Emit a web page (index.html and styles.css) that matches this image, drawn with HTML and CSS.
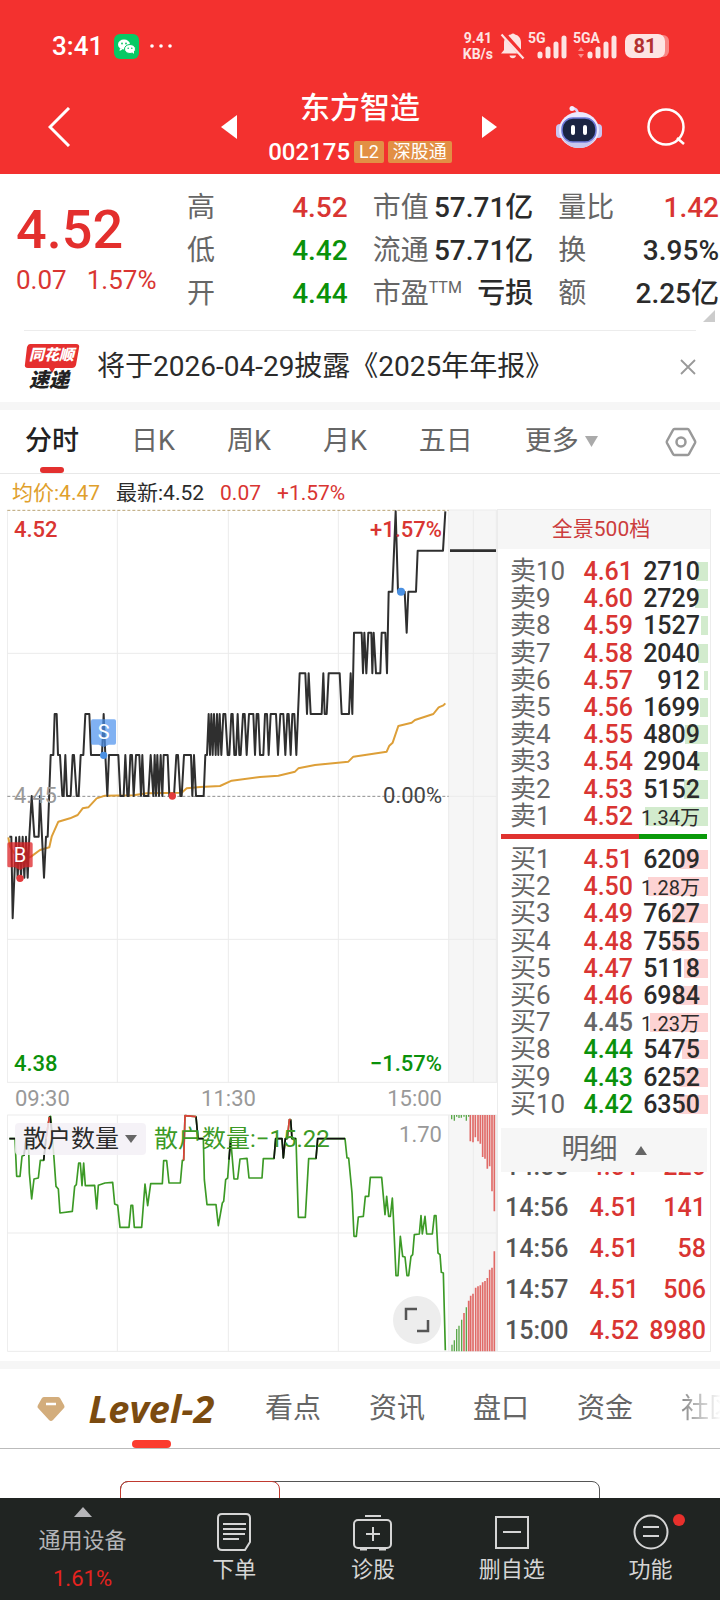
FILE: index.html
```html
<!DOCTYPE html>
<html lang="zh-CN">
<head>
    <meta charset="UTF-8">
    <meta name="viewport" content="width=device-width, initial-scale=1">
    <title>东方智造 002175</title>
    <link rel="stylesheet" href="styles.css">
</head>
<body>
    <header class="header">
        <div class="status-bar">
            <span class="clock">3:41</span>
            <svg class="wechat" width="25" height="25" viewBox="0 0 25 25">
                <rect width="25" height="25" rx="6" fill="#07c964"/>
                <ellipse cx="10" cy="10.500" rx="6" ry="5" fill="#fff"/>
                <path d="M6 14l-.5 3 3-1.500z" fill="#fff"/>
                <ellipse cx="16" cy="15" rx="5.500" ry="4.500" fill="#fff" stroke="#07c964"/>
                <path d="M18 18l2 2 0-3z" fill="#fff"/>
                <circle cx="8" cy="9.500" r=".9" fill="#07c964"/>
                <circle cx="12" cy="9.500" r=".9" fill="#07c964"/>
                <circle cx="14.200" cy="14.300" r=".8" fill="#07c964"/>
                <circle cx="17.800" cy="14.300" r=".8" fill="#07c964"/>
            </svg>
            <svg width="22" height="4" viewBox="0 0 22 4" fill="#fff">
                <circle cx="2" cy="2" r="1.800"/><circle cx="11" cy="2" r="1.800"/><circle cx="20" cy="2" r="1.800"/>
            </svg>
            <div class="net-speed">9.41<br>KB/s</div>
            <svg class="bell" width="26" height="28" viewBox="0 0 26 28">
                <path d="M1 21.500L4 18V11c0-5 3-8 7-8.500a2.500 2.500 0 0 1 4 0c4 1 6 4 6 8.500v7l3 3.500z" fill="#fde4e3"/>
                <path d="M9.500 23.500h6.500a3.300 3.300 0 0 1-6.500 0z" fill="#fde4e3"/>
                <path d="M3 1L25 26" stroke="#f3312f" stroke-width="5"/>
                <path d="M1.500 2.500L23.500 26.500" stroke="#fde4e3" stroke-width="2.200"/>
            </svg>
            <div class="signal">
                <span>5G</span>
                <svg width="30" height="25" viewBox="0 0 30 25" stroke="#fde4e3" stroke-width="5" stroke-linecap="round">
                    <path d="M3 20v2M11 15v7M19 10v12M27 4v18"/>
                </svg>
            </div>
            <div class="signal">
                <span>5GA</span>
                <svg width="40" height="25" viewBox="0 0 40 25">
                    <path d="M1 17l3-4 3 4zM1 20l3 4 3-4z" fill="#f98d8b"/>
                    <path d="M13 20v2M21 15v7M29 10v12M37 4v18" stroke="#fde4e3" stroke-width="5" stroke-linecap="round"/>
                </svg>
            </div>
            <div class="battery">81</div>
        </div>
        <nav class="title-bar">
            <div class="title-left">
                <button class="icon-btn" aria-label="返回">
                    <svg width="24" height="40" viewBox="0 0 24 40" fill="none" stroke="#fff" stroke-width="3">
                        <path d="M21 1L2 20l19 19"/>
                    </svg>
                </button>
                <button class="icon-btn" aria-label="上一只">
                    <svg width="16" height="24" viewBox="0 0 16 24" fill="#fff"><path d="M16 0v24L0 12z"/></svg>
                </button>
            </div>
            <div class="stock">
                <h1>东方智造</h1>
                <div class="stock-code">
                    <span>002175</span>
                    <span class="tag">L2</span>
                    <span class="tag">深股通</span>
                </div>
            </div>
            <div class="title-right">
                <button class="icon-btn" aria-label="下一只">
                    <svg width="16" height="22" viewBox="0 0 16 22" fill="#fff"><path d="M0 0v22L15 11z"/></svg>
                </button>
                <button class="icon-btn robot" aria-label="智能助手">
                    <svg width="46" height="42" viewBox="0 0 46 42">
                        <path d="M15 2q7 0 7 7" fill="none" stroke="#dcd3f8" stroke-width="2.500"/>
                        <circle cx="16" cy="2.500" r="2.500" fill="#f3edff"/>
                        <rect x="0" y="18" width="8" height="14" rx="4" fill="#c9c6f2"/>
                        <rect x="38" y="18" width="8" height="14" rx="4" fill="#c9c6f2"/>
                        <ellipse cx="23" cy="24" rx="20" ry="18" fill="#ebe8ff"/>
                        <path d="M6 32q17 10 34 0q-6 10-17 10T6 32z" fill="#c9c8ee"/>
                        <rect x="6" y="12" width="34" height="24" rx="11" fill="#1b2442" stroke="#6d78d8" stroke-width="1.500"/>
                        <path d="M17 21v6M29 21v6" stroke="#fff" stroke-width="4" stroke-linecap="round"/>
                    </svg>
                </button>
                <button class="icon-btn" aria-label="搜索">
                    <svg width="40" height="40" viewBox="0 0 40 40" fill="none" stroke="#fff" stroke-width="2.500">
                        <circle cx="20" cy="20" r="17.500"/><path d="M31 31l7 6"/>
                    </svg>
                </button>
            </div>
        </nav>
    </header>

    <section class="quote">
        <div class="quote-price">
            <strong>4.52</strong>
            <div class="quote-change"><span>0.07</span><span>1.57%</span></div>
        </div>
        <dl class="quote-list">
            <div><dt>高</dt><dd class="up">4.52</dd></div>
            <div><dt>低</dt><dd class="down">4.42</dd></div>
            <div><dt>开</dt><dd class="down">4.44</dd></div>
        </dl>
        <dl class="quote-list">
            <div><dt>市值</dt><dd>57.71亿</dd></div>
            <div><dt>流通</dt><dd>57.71亿</dd></div>
            <div><dt>市盈<sup>TTM</sup></dt><dd>亏损</dd></div>
        </dl>
        <dl class="quote-list">
            <div><dt>量比</dt><dd class="up">1.42</dd></div>
            <div><dt>换</dt><dd>3.95%</dd></div>
            <div><dt>额</dt><dd>2.25亿</dd></div>
        </dl>
        <svg class="quote-corner" width="12" height="12" viewBox="0 0 12 12"><path d="M12 0v12H0z" fill="#ccc"/></svg>
    </section>

    <section class="news">
        <div class="news-logo">
            <svg width="56" height="32" viewBox="0 0 56 32"><path d="M6 0h46q4 0 3 4l-3 17q-1 3-4 3H31l-3 5-3-5H4q-4 0-3-4L3 3q1-3 3-3z" fill="#e52f2e"/></svg>
            <span class="news-brand">同花顺</span>
            <span class="news-flash">速递</span>
        </div>
        <a class="news-text" href="#">将于2026-04-29披露《2025年年报》</a>
        <button class="icon-btn" aria-label="关闭">
            <svg width="16" height="16" viewBox="0 0 16 16" stroke="#999" stroke-width="1.800"><path d="M1 1l14 14M15 1L1 15"/></svg>
        </button>
    </section>

    <nav class="period-tabs">
        <button class="active">分时</button>
        <button>日K</button>
        <button>周K</button>
        <button>月K</button>
        <button>五日</button>
        <button>更多<svg width="13" height="11" viewBox="0 0 13 11"><path d="M0 0h13L6.500 11z" fill="#aaa"/></svg></button>
        <button class="settings" aria-label="设置">
            <svg width="32" height="30" viewBox="0 0 32 30" fill="none" stroke="#999" stroke-width="2.500">
                <path d="M9.500 2h13q1 0 1.500 1l6 11q.5 1 0 2l-6 11q-.5 1-1.500 1h-13q-1 0-1.500-1L2 16q-.5-1 0-2L8 3q.5-1 1.500-1z"/>
                <circle cx="16" cy="15" r="4.500"/>
            </svg>
        </button>
    </nav>

    <div class="legend">
        <span class="avg">均价:4.47</span>
        <span>最新:4.52</span>
        <span class="up">0.07</span>
        <span class="up">+1.57%</span>
    </div>

    <main class="board">
        <div class="charts">
            <div class="chart">
                <svg viewBox="21 27 1470 1722">
                    <rect x="1347" y="30" width="144" height="1718" fill="#f6f6f6"/>
                    <path class="grid" d="M22 30V1748M352 30V1748M685 30V1748M1015 30V1748M1346 30V1748M1420 30V1748M1489 30V1748M22 460H1490M22 1318H1490M22 1747H1490M1346 30H1490M1346 889H1490"/>
                    <path d="M22 31H1346" stroke="#b9a375" stroke-width="3" stroke-dasharray="9 6"/>
                    <path d="M22 889H1346" stroke="#8c8c8c" stroke-width="3" stroke-dasharray="9 6"/>
                    <!-- average price -->
                    <polyline class="line" stroke="#dd9f38" points="25,1012 30,1040 60,1085 93,1070 120,1050 148,1042 155,1010 175,965 210,955 233,945 248,925 265,922 290,895 315,887 400,886 440,880 545,878 560,865 600,861 660,858 695,842 780,831 835,827 885,815 895,805 945,795 1045,785 1060,770 1160,755 1168,737 1178,728 1195,678 1235,668 1245,660 1300,642 1316,622 1330,616 1336,610"/>
                    <!-- last price -->
                    <polyline class="line" stroke="#2f2f2f" points="28,1010 34,1010 38,1255 48,1012 53,1133 58,1010 63,1133 68,1010 73,1133 78,1010 83,1133 88,1010 95,888 103,1010 116,1010 120,888 126,1010 132,1133 138,1010 143,1010 152,765 160,765 164,642 170,642 174,765 180,765 187,888 191,888 196,765 201,888 212,888 218,765 222,765 230,888 236,888 242,765 250,765 256,642 268,642 273,765 306,765 311,642 316,765 322,888 327,765 355,765 361,888 371,888 376,765 382,888 386,888 391,765 396,765 401,888 408,765 418,765 423,888 427,765 432,888 445,888 452,765 460,888 464,765 468,888 472,765 477,888 482,765 487,888 491,765 503,765 508,888 522,888 529,765 534,765 541,888 545,888 552,765 573,765 577,888 582,765 588,888 611,888 616,765 621,765 626,642 630,765 634,642 638,765 642,642 647,765 651,642 655,765 659,642 664,765 670,642 676,642 683,765 688,765 694,642 698,642 703,765 708,765 713,642 718,765 722,765 729,642 734,642 740,765 747,642 760,642 765,765 770,642 775,642 780,765 790,765 795,642 801,642 806,765 812,642 828,642 834,765 841,642 850,642 856,765 862,642 866,642 872,765 877,642 883,642 889,765 894,642 899,520 916,520 921,642 926,520 932,642 965,642 970,520 974,642 980,642 986,520 1019,520 1025,642 1047,642 1052,520 1057,642 1062,398 1085,398 1089,520 1093,398 1099,520 1105,398 1114,398 1117,520 1121,398 1128,520 1141,520 1145,398 1156,398 1161,520 1166,275 1177,275 1187,34 1194,275 1214,275 1220,398 1225,275 1248,275 1253,152 1329,152 1336,34"/>
                    <path d="M1350 152H1488" stroke="#2f2f2f" stroke-width="8"/>
                    <!-- buy and sell marks -->
                    <path d="M278 658h65q5 0 5 5v66q0 5-5 5h-17l-15 8-15-8h-18q-5 0-5-5v-66q0-5 5-5z" fill="#4a90ec" fill-opacity=".7"/>
                    <path d="M27 1027h66q5 0 5 5v65q0 5-5 5H75l-15 9-15-9H27q-5 0-5-5v-65q0-5 5-5z" fill="#dd2226" fill-opacity=".75"/>
                    <text class="mark" x="311" y="716">S</text>
                    <text class="mark" x="60" y="1085">B</text>
                    <g fill="#e23a3c"><circle cx="60" cy="1135" r="11"/><circle cx="517" cy="888" r="11"/></g>
                    <g fill="#4a90e2"><circle cx="311" cy="766" r="11"/><circle cx="1203" cy="275" r="12"/></g>
                </svg>
                <span class="label top-left up">4.52</span>
                <span class="label top-right up">+1.57%</span>
                <span class="label mid-left">4.45</span>
                <span class="label mid-right">0.00%</span>
                <span class="label bottom-left down">4.38</span>
                <span class="label bottom-right down">−1.57%</span>
            </div>
            <div class="time-axis">
                <span>09:30</span>
                <span>11:30</span>
                <span>15:00</span>
            </div>
            <div class="chart">
                <svg viewBox="21 223 1470 714">
                    <rect x="1347" y="226" width="144" height="710" fill="#f6f6f6"/>
                    <path class="grid" d="M22 226V935M352 226V935M685 226V935M1015 226V935M1346 226V935M1420 226V935M1489 226V935M22 226H1490M22 580H1490M22 935H1490"/>
                    <g class="line thin">
                        <polyline stroke="#3c9a26" points="28,297 45,297 50,410 60,410 66,350 72,347 78,297 85,297 88,400 95,478 102,418 115,415 121,362 131,362 138,297 148,232 152,230 158,300 168,440 175,448 180,520 217,515 224,440 229,435 236,370 241,370 246,438 251,370 256,438 284,437 290,508 295,437 315,430 338,428 344,493 353,497 360,563 387,563 393,497 398,497 403,563 425,563 435,433 443,498 452,432 487,432 491,363 500,363 507,430 541,430 547,362 551,362 555,228 588,231 594,297 610,297 613,420 621,495 648,495 655,558 667,490 671,485 677,420 683,415 687,360 692,297 702,418 713,418 720,358 741,356 747,415 786,415 790,357 822,357 827,297 846,297 850,355 856,297 862,297 868,240 872,240 876,297 888,297 895,533 916,533 926,357 948,357 953,297 1035,297 1041,355 1046,355 1056,460 1062,590 1069,590 1075,532 1090,530 1096,470 1106,470 1111,413 1145,413 1155,525 1160,470 1166,530 1171,530 1177,475 1180,530 1188,708 1194,708 1201,590 1208,650 1215,652 1221,708 1226,708 1233,650 1238,645 1243,585 1258,583 1263,528 1267,583 1275,530 1280,583 1297,583 1303,528 1308,528 1314,640 1320,645 1324,698 1330,700 1336,932"/>
                        <path stroke="#111" d="M28 297H45M72 347L78 297M131 362L138 297M150 230L158 300M588 231L594 297H610M687 360L692 297M822 357L827 297H846L850 355 856 297H862M872 240L876 297H888M948 357L953 297H1035"/>
                        <path stroke="#e0403c" d="M138 297L148 232M551 362L555 228 588 231M862 297L868 240H872"/>
                    </g>
                    <!-- closing auction -->
                    <path stroke="#e06a67" stroke-width="5" d="M1411 226V305M1419 226V308M1426 226V293M1434 226V305M1441 226V312M1448 226V352M1455 226V357M1462 226V387M1469 226V380M1476 226V455M1483 226V515M1392 935V820M1406 935V783M1412 935V768M1419 935V762M1427 935V744M1434 935V740M1441 935V737M1448 935V728M1455 935V724M1462 935V715M1469 935V690M1476 935V684M1483 935V635"/>
                    <path stroke="#5aa84a" stroke-width="4" d="M1355 226V239M1363 226V243M1370 226V231M1377 226V235M1384 226V234M1392 226V231M1399 226V243M1406 226V231M1356 935V915M1363 935V902M1370 935V868M1377 935V858M1385 935V840M1399 935V803"/>
                </svg>
                <button class="indicator">散户数量<svg width="12" height="8" viewBox="0 0 12 8"><path d="M0 0h12L6 8z" fill="#666"/></svg></button>
                <span class="indicator-value">散户数量:−15.22</span>
                <span class="indicator-max">1.70</span>
                <button class="expand" aria-label="全屏">
                    <svg width="26" height="26" viewBox="0 0 26 26" fill="none" stroke="#555" stroke-width="2.500"><path d="M2 13V2h11M24 13v11H13"/></svg>
                </button>
            </div>
        </div>

        <aside class="depth">
            <button class="depth-title">全景500档</button>
            <table class="ladder asks">
                <tr><th>卖10</th><td class="up">4.61</td><td><i style="width: 12px"></i><b>2710</b></td></tr>
                <tr><th>卖9</th><td class="up">4.60</td><td><i style="width: 13px"></i><b>2729</b></td></tr>
                <tr><th>卖8</th><td class="up">4.59</td><td><i style="width: 7px"></i><b>1527</b></td></tr>
                <tr><th>卖7</th><td class="up">4.58</td><td><i style="width: 10px"></i><b>2040</b></td></tr>
                <tr><th>卖6</th><td class="up">4.57</td><td><i style="width: 4px"></i><b>912</b></td></tr>
                <tr><th>卖5</th><td class="up">4.56</td><td><i style="width: 8px"></i><b>1699</b></td></tr>
                <tr><th>卖4</th><td class="up">4.55</td><td><i style="width: 23px"></i><b>4809</b></td></tr>
                <tr><th>卖3</th><td class="up">4.54</td><td><i style="width: 14px"></i><b>2904</b></td></tr>
                <tr><th>卖2</th><td class="up">4.53</td><td><i style="width: 24px"></i><b>5152</b></td></tr>
                <tr><th>卖1</th><td class="up">4.52</td><td><i style="width: 63px"></i><b class="small">1.34万</b></td></tr>
            </table>
            <div class="ratio"><span style="width: 67%"></span></div>
            <table class="ladder bids">
                <tr><th>买1</th><td class="up">4.51</td><td><i style="width: 28px"></i><b>6209</b></td></tr>
                <tr><th>买2</th><td class="up">4.50</td><td><i style="width: 60px"></i><b class="small">1.28万</b></td></tr>
                <tr><th>买3</th><td class="up">4.49</td><td><i style="width: 36px"></i><b>7627</b></td></tr>
                <tr><th>买4</th><td class="up">4.48</td><td><i style="width: 36px"></i><b>7555</b></td></tr>
                <tr><th>买5</th><td class="up">4.47</td><td><i style="width: 24px"></i><b>5118</b></td></tr>
                <tr><th>买6</th><td class="up">4.46</td><td><i style="width: 32px"></i><b>6984</b></td></tr>
                <tr><th>买7</th><td class="flat">4.45</td><td><i style="width: 58px"></i><b class="small">1.23万</b></td></tr>
                <tr><th>买8</th><td class="down">4.44</td><td><i style="width: 26px"></i><b>5475</b></td></tr>
                <tr><th>买9</th><td class="down">4.43</td><td><i style="width: 29px"></i><b>6252</b></td></tr>
                <tr><th>买10</th><td class="down">4.42</td><td><i style="width: 29px"></i><b>6350</b></td></tr>
            </table>
            <button class="detail-title">明细<svg width="12" height="9" viewBox="0 0 12 9"><path d="M6 0l6 9H0z" fill="#666"/></svg></button>
            <div class="trades">
                <table>
                    <tr><td>14:56</td><td>4.51</td><td>220</td></tr>
                    <tr><td>14:56</td><td>4.51</td><td>141</td></tr>
                    <tr><td>14:56</td><td>4.51</td><td>58</td></tr>
                    <tr><td>14:57</td><td>4.51</td><td>506</td></tr>
                    <tr><td>15:00</td><td>4.52</td><td>8980</td></tr>
                </table>
            </div>
        </aside>
    </main>

    <nav class="info-tabs">
        <svg width="28" height="24" viewBox="0 0 28 24">
            <path d="M7 0h14q1 0 2 1l4 7q1 2 0 3L16 23q-2 2-4 0L1 11Q0 10 1 8l4-7q1-1 2-1z" fill="#d3ad7c"/>
            <path d="M9 7h10" stroke="#fff" stroke-width="2.500"/>
        </svg>
        <button class="level2">Level-2</button>
        <button>看点</button>
        <button>资讯</button>
        <button>盘口</button>
        <button>资金</button>
        <button class="fade">社区</button>
    </nav>

    <div class="segment">
        <span class="segment-active"></span>
    </div>

    <nav class="bottom-nav">
        <button class="sector">
            <svg width="18" height="10" viewBox="0 0 18 10"><path d="M9 0l9 10H0z" fill="#b5b5b8"/></svg>
            <span>通用设备</span>
            <span class="sector-change">1.61%</span>
        </button>
        <button>
            <svg width="34" height="38" viewBox="0 0 34 38" fill="none" stroke="#d5d5d5" stroke-width="2">
                <path d="M5 1h24q4 0 4 4v24l-5 8H5q-4 0-4-4V5q0-4 4-4z"/>
                <path d="M6 11h23M6 16h23M6 21h22M6 26h16"/>
            </svg>
            <span>下单</span>
        </button>
        <button>
            <svg width="40" height="38" viewBox="0 0 40 38" fill="none" stroke="#d5d5d5" stroke-width="2">
                <rect x="1" y="7" width="37" height="28" rx="4"/>
                <path d="M12 3h16M20 14v14M13 21h14"/>
                <path d="M7 36h7M26 36h7" stroke-width="3"/>
            </svg>
            <span>诊股</span>
        </button>
        <button>
            <svg width="34" height="38" viewBox="0 0 34 38" fill="none" stroke="#d5d5d5" stroke-width="2">
                <rect x="1" y="4" width="32" height="31"/><path d="M8 19h18"/>
            </svg>
            <span>删自选</span>
        </button>
        <button class="more">
            <svg width="36" height="38" viewBox="0 0 36 38" fill="none" stroke="#d5d5d5" stroke-width="2">
                <circle cx="18" cy="19" r="16.500"/><path d="M10 14h16M10 23h16"/>
            </svg>
            <span>功能</span>
        </button>
    </nav>
</body>
</html>
```

FILE: styles.css
```css
* {
    box-sizing: border-box;
}

body {
    margin: 0;
    font-family: Roboto, "Noto Sans CJK SC", sans-serif;
    color: #2b2b2b;
    background-color: #fff;
    overflow-x: hidden;
}

button {
    padding: 0;
    border: none;
    background: none;
    font: inherit;
    color: inherit;
    cursor: pointer;
}

svg {
    display: block;
    flex-shrink: 0;
}

.icon-btn {
    display: flex;
}

.up {
    color: #d93532;
}

.down {
    color: #0a910a;
}

.flat {
    color: #666;
}

/* header */
.header {
    background-color: #f3312f;
    color: #fff;
}

.status-bar {
    display: flex;
    align-items: center;
    height: 62px;
    padding: 30px 50px 0 52px;
}

.clock {
    font-size: 26px;
    font-weight: 500;
    line-height: 32px;
}

.wechat {
    margin: 0 11px;
}

.net-speed {
    margin-left: auto;
    font-size: 14px;
    font-weight: 700;
    line-height: 16px;
    text-align: center;
    color: #fde4e3;
}

.bell {
    margin: 0 4px 0 7px;
}

.signal {
    position: relative;
    margin-right: 8px;
    padding-left: 7px;
}

.signal span {
    position: absolute;
    top: -4px;
    left: -2px;
    font-size: 14px;
    font-weight: 700;
    line-height: 16px;
    color: #fde4e3;
}

.signal + .signal {
    padding-left: 2px;
}

.battery {
    width: 40px;
    margin-right: 5px;
    border-radius: 7px;
    background-color: #fde4e3;
    box-shadow: 5px 0 0 -1px #f98583;
    color: #b3302f;
    font-size: 20px;
    font-weight: 700;
    line-height: 24px;
    text-align: center;
}

.title-bar {
    display: grid;
    grid-template-columns: 1fr auto 1fr;
    align-items: center;
    padding: 28px 34px 10px;
}

.title-left,
.title-right {
    display: flex;
    align-items: center;
    justify-content: space-between;
}

.title-left {
    margin: 0 31px 0 14px;
}

.title-right {
    margin-left: 30px;
}

.robot {
    margin-left: 14px;
}

.stock {
    display: flex;
    flex-direction: column;
    align-items: center;
    gap: 14px;
}

.stock h1 {
    margin: 0;
    font-size: 30px;
    font-weight: 500;
    line-height: 36px;
}

.stock-code {
    display: flex;
    align-items: center;
    gap: 4px;
    font-size: 24px;
    font-weight: 500;
    line-height: 24px;
}

.tag {
    padding: 0 5px;
    border-radius: 2px;
    background-color: #e28f45;
    font-size: 18px;
    font-weight: 400;
    line-height: 22px;
}

/* quote */
.quote {
    position: relative;
    display: grid;
    grid-template-columns: 146px 1fr 1fr 1fr;
    column-gap: 25px;
    padding: 12px 1px 15px 16px;
}

.quote-price {
    padding-top: 16px;
    color: #e32f2d;
}

.quote-price strong {
    display: block;
    font-size: 54px;
    font-weight: 500;
    line-height: 56px;
}

.quote-change {
    display: flex;
    gap: 20px;
    padding-top: 6px;
    font-size: 26px;
    line-height: 32px;
    color: #d93532;
}

.quote-list {
    margin: 0;
    font-size: 28px;
    line-height: 43px;
}

.quote-list div {
    display: flex;
    justify-content: space-between;
    height: 43px;
    white-space: nowrap;
}

.quote-list dt {
    color: #666;
}

.quote-list dd {
    margin: 0;
    font-weight: 500;
}

.quote-list sup {
    font-size: 16px;
    line-height: 16px;
}

.quote-corner {
    position: absolute;
    right: 5px;
    bottom: 8px;
}

/* news */
.news {
    display: flex;
    align-items: center;
    margin: 0 24px;
    height: 72px;
    border-top: 1px solid #ececec;
}

.news-logo {
    position: relative;
    width: 56px;
    height: 46px;
    margin-right: 17px;
    font-weight: 900;
    font-style: italic;
}

.news-brand,
.news-flash {
    position: absolute;
    top: 0;
    left: 5px;
    font-size: 15px;
    line-height: 22px;
    color: #fff;
}

.news-flash {
    top: 25px;
    font-size: 20px;
    color: #222;
}

.news-text {
    flex: 1;
    font-size: 28px;
    line-height: 36px;
    color: #2b2b2b;
    text-decoration: none;
}

/* period tabs */
.period-tabs {
    display: flex;
    align-items: center;
    gap: 52px;
    height: 72px;
    padding: 0 23px 0 25px;
    border-top: 8px solid #f6f6f6;
    border-bottom: 1px solid #e8e8e8;
    font-size: 27px;
    line-height: 63px;
    color: #666;
}

.period-tabs button {
    position: relative;
    display: flex;
    align-items: center;
    gap: 6px;
    white-space: nowrap;
}

.period-tabs .active {
    color: #222;
    font-weight: 500;
}

.period-tabs .active::after {
    content: "";
    position: absolute;
    left: 15px;
    bottom: 0;
    width: 24px;
    height: 6px;
    border-radius: 3px;
    background-color: #e3302f;
}

.period-tabs .settings {
    margin-left: auto;
}

.legend {
    display: flex;
    gap: 16px;
    padding: 4px 12px 0;
    font-size: 21px;
    line-height: 31px;
}

.legend .avg {
    color: #e0a02c;
}

/* charts */
.board {
    display: flex;
    margin: 0 9px 9px 7px;
}

.charts {
    flex: 1;
    min-width: 0;
}

.chart {
    position: relative;
}

.chart > svg {
    width: 100%;
}

.grid {
    fill: none;
    stroke: #ebebeb;
    stroke-width: 3;
}

.line {
    fill: none;
    stroke-width: 6;
    stroke-linejoin: round;
}

.thin {
    stroke-width: 5;
}

.mark {
    font-size: 60px;
    fill: #fff;
    text-anchor: middle;
}

.label {
    position: absolute;
    left: 7px;
    font-size: 22px;
    font-weight: 500;
    line-height: 24px;
}

.top-right,
.mid-right,
.bottom-right {
    left: auto;
    right: 55px;
}

.top-left,
.top-right {
    top: 9px;
}

.mid-left,
.mid-right {
    top: 50%;
    margin-top: -12px;
    color: #444;
    font-weight: 400;
}

.mid-left {
    color: #999;
}

.bottom-left,
.bottom-right {
    bottom: 7px;
}

.time-axis {
    display: flex;
    justify-content: space-between;
    padding: 0 55px 0 8px;
    font-size: 22px;
    line-height: 31px;
    color: #999;
}

.indicator {
    position: absolute;
    top: 9px;
    left: 8px;
    display: flex;
    align-items: center;
    gap: 6px;
    padding: 0 9px 0 8px;
    border-radius: 4px;
    background-color: rgba(243, 240, 246, 0.85);
    font-size: 24px;
    line-height: 32px;
}

.indicator-value,
.indicator-max {
    position: absolute;
    top: 9px;
    left: 147px;
    font-size: 24px;
    line-height: 32px;
    color: #3c9a26;
}

.indicator-max {
    left: auto;
    right: 55px;
    top: 5px;
    font-size: 22px;
    color: #999;
}

.expand {
    position: absolute;
    right: 56px;
    bottom: 8px;
    display: flex;
    align-items: center;
    justify-content: center;
    width: 48px;
    height: 48px;
    border-radius: 50%;
    background-color: #ededed;
}

/* order book */
.depth {
    display: flex;
    flex-direction: column;
    width: 214px;
    border: 1px solid #ececec;
}

.depth-title {
    padding-right: 6px;
    background-color: #f6f6f6;
    color: #cc3d3d;
    font-size: 21px;
    line-height: 39px;
}

.depth table {
    border-collapse: collapse;
    table-layout: fixed;
}

.depth th,
.depth td {
    padding: 0;
}

.ladder {
    width: 207px;
    height: 272px;
    margin: 0 3px;
    font-size: 26px;
    line-height: 27px;
}

.asks {
    margin-top: 9px;
}

.ladder th {
    width: 74px;
    padding-left: 9px;
    font-weight: 400;
    text-align: left;
    color: #666;
}

.ladder td {
    position: relative;
    font-size: 25px;
    font-weight: 500;
    text-align: right;
}

.ladder td:nth-child(2) {
    width: 58px;
}

.ladder td:last-child {
    padding-right: 8px;
}

.ladder i {
    position: absolute;
    top: 4px;
    right: 0;
    height: 19px;
    background-color: #d2ebcd;
}

.bids i {
    background-color: #fdd3d3;
}

.ladder b {
    position: relative;
    font-weight: 500;
}

.ladder .small {
    font-size: 20px;
    font-weight: 400;
    line-height: 20px;
}

.ratio {
    height: 5px;
    margin: 4px 3px 7px;
    background-color: #0a9a0a;
}

.ratio span {
    display: block;
    height: 5px;
    background-color: #e0322f;
}

.detail-title {
    display: flex;
    align-items: center;
    justify-content: center;
    gap: 17px;
    margin: 10px 3px 0;
    background-color: #f6f6f6;
    color: #666;
    font-size: 28px;
    line-height: 44px;
}

.trades {
    display: flex;
    flex: 1 0 178px;
    flex-direction: column;
    justify-content: flex-end;
    height: 178px;
    overflow: hidden;
}

.trades table {
    flex-shrink: 0;
    height: 205px;
    margin: 0 4px 0 7px;
    font-size: 25px;
    font-weight: 500;
    color: #d93532;
}

.trades td {
    width: 64px;
    text-align: right;
}

.trades td:first-child {
    text-align: left;
    color: #555;
}

/* info tabs */
.info-tabs {
    position: relative;
    display: flex;
    align-items: center;
    gap: 48px;
    height: 88px;
    padding-left: 37px;
    border-top: 8px solid #f6f6f6;
    border-bottom: 1px solid #bbb;
    font-size: 28px;
    line-height: 79px;
    color: #666;
    overflow: hidden;
}

.info-tabs button {
    flex-shrink: 0;
}

.info-tabs .level2 {
    position: relative;
    width: 131px;
    margin-left: -27px;
    font-family: "Open Sans", sans-serif;
    font-size: 38px;
    font-weight: 700;
    font-style: italic;
    white-space: nowrap;
    color: #7b4b10;
}

.level2::after {
    content: "";
    position: absolute;
    left: 46px;
    bottom: 0;
    width: 39px;
    height: 8px;
    border-radius: 4px;
    background-color: #fb3b2e;
}

.info-tabs .fade {
    background: linear-gradient(to right, #888, #fff 40px);
    background-clip: text;
    -webkit-background-clip: text;
    color: transparent;
}

.segment {
    height: 60px;
    margin: 32px 120px 0;
    border: 1px solid #555;
    border-radius: 8px;
}

.segment-active {
    display: block;
    width: 160px;
    height: 60px;
    margin: -1px;
    border: 1px solid #c0392f;
    border-radius: 8px;
}

/* bottom nav */
.bottom-nav {
    position: fixed;
    left: 0;
    right: 0;
    bottom: 0;
    display: flex;
    height: 102px;
    background-color: #202422;
    color: #d5d5d5;
    font-size: 22px;
    line-height: 28px;
}

.bottom-nav button {
    position: relative;
    display: flex;
    flex: 1;
    flex-direction: column;
    align-items: center;
    gap: 5px;
    padding-top: 15px;
}

.bottom-nav .sector {
    flex: 0 0 165px;
    gap: 10px;
    padding-top: 9px;
    color: #b5b5b8;
}

.bottom-nav .sector-change {
    color: #e5231f;
}

.more::after {
    content: "";
    position: absolute;
    top: 16px;
    left: 50%;
    width: 12px;
    height: 12px;
    margin-left: 22px;
    border-radius: 50%;
    background-color: #e7302c;
}
```
